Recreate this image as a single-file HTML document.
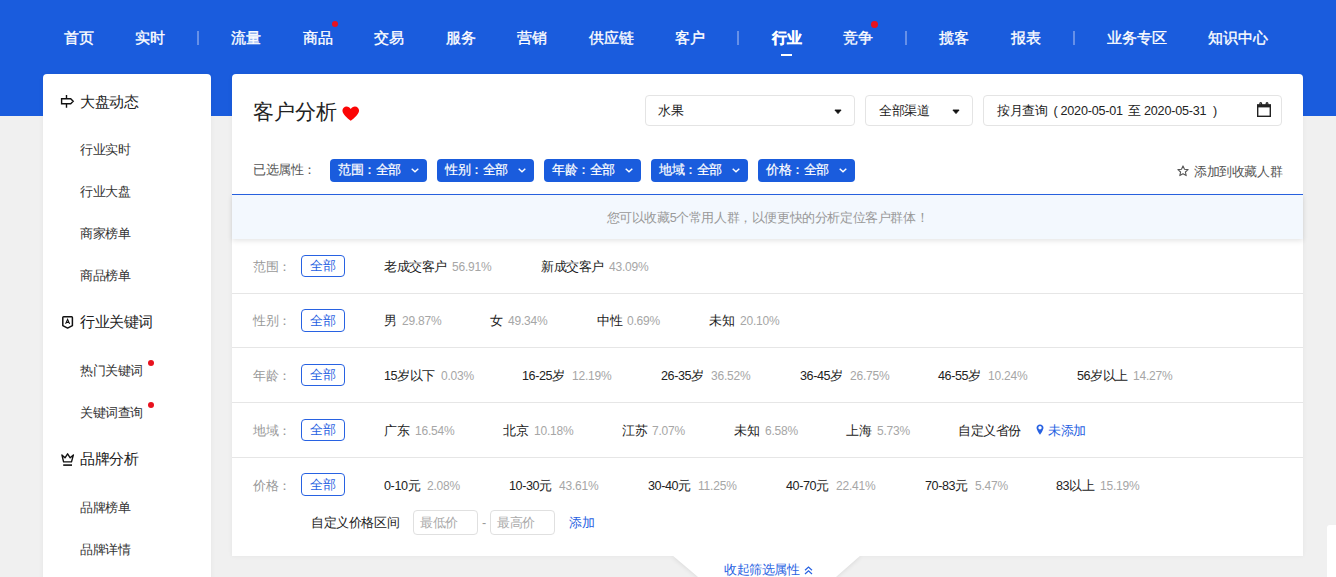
<!DOCTYPE html>
<html>
<head>
<meta charset="utf-8">
<style>
*{box-sizing:border-box;margin:0;padding:0}
html,body{width:1336px;height:577px;overflow:hidden;background:#f0f0f0;font-family:"Liberation Sans",sans-serif;letter-spacing:-0.4px;}
body{position:relative;}
.abs{position:absolute;white-space:nowrap;}
#hdr{position:absolute;left:0;top:0;width:1336px;height:116px;background:#1a5cdd;}
.nav{letter-spacing:0;position:absolute;top:27.5px;height:20px;line-height:20px;font-size:14.7px;color:#fff;white-space:nowrap;-webkit-text-stroke:0.35px #fff;}
.sep{position:absolute;top:31px;width:2px;height:14px;background:#6690e8;margin-left:-1px;}
.dot{position:absolute;width:6.8px;height:6.8px;border-radius:50%;background:#e8121e;}
#side{position:absolute;left:43px;top:74px;width:168px;height:520px;background:#fff;border-radius:4px 4px 0 0;box-shadow:0 0 5px rgba(0,0,0,0.05);}
.sh{position:absolute;left:37px;font-size:14.6px;color:#222;height:20px;line-height:20px;white-space:nowrap;}
.si{position:absolute;left:37px;margin-top:0.6px;font-size:12.6px;color:#333;height:20px;line-height:20px;white-space:nowrap;}
#main{position:absolute;left:232px;top:74px;width:1071px;height:482px;background:#fff;border-radius:4px 4px 0 0;box-shadow:0 0 5px rgba(0,0,0,0.05);}
.sel{position:absolute;top:21px;height:31px;border:1px solid #e4e4e4;border-radius:4px;background:#fff;font-size:12.6px;color:#222;line-height:30px;white-space:nowrap;}
.caret{position:absolute;top:13.2px;width:8px;height:6px;}
.tag{position:absolute;top:85px;width:97px;height:23px;background:#1a5cdd;border-radius:4px;color:#fff;font-size:12.6px;line-height:22px;padding-left:8px;white-space:nowrap;-webkit-text-stroke:0.2px #fff;}
.tag svg{position:absolute;left:80.5px;top:8.5px;}
.hr{position:absolute;left:0;width:1071px;height:1px;background:#e6e6e6;}
.lbl{position:absolute;left:21px;font-size:12.6px;color:#999;height:20px;line-height:20px;white-space:nowrap;}
.all{position:absolute;left:69px;width:44px;height:22px;border:1px solid #2862e2;border-radius:4px;color:#2862e2;font-size:12.6px;line-height:20px;text-align:center;}
.opt{position:absolute;font-size:12.6px;color:#222;height:20px;line-height:20px;white-space:nowrap;}
.pct{position:absolute;font-size:12px;letter-spacing:-0.2px;color:#a6a6a6;height:20px;line-height:20px;white-space:nowrap;}
.inp{position:absolute;top:436px;width:65px;height:25px;border:1px solid #e0e0e0;border-radius:4px;font-size:12.6px;color:#aaa;line-height:25px;padding-left:6px;white-space:nowrap;}
</style>
</head>
<body>
<div id="hdr">
  <div class="nav" style="left:64px">首页</div>
  <div class="nav" style="left:135px">实时</div>
  <div class="sep" style="left:198px"></div>
  <div class="nav" style="left:231px">流量</div>
  <div class="nav" style="left:303px">商品</div>
  <div class="dot" style="left:331.6px;top:20.7px"></div>
  <div class="nav" style="left:374px">交易</div>
  <div class="nav" style="left:446px">服务</div>
  <div class="nav" style="left:517px">营销</div>
  <div class="nav" style="left:589px">供应链</div>
  <div class="nav" style="left:675px">客户</div>
  <div class="sep" style="left:738px"></div>
  <div class="nav" style="left:772px;font-weight:bold;-webkit-text-stroke:0.25px #fff">行业</div>
  <div class="abs" style="left:781px;top:54px;width:11px;height:2px;background:#fff"></div>
  <div class="nav" style="left:843px">竞争</div>
  <div class="dot" style="left:871.1px;top:21px"></div>
  <div class="sep" style="left:906px"></div>
  <div class="nav" style="left:939px">揽客</div>
  <div class="nav" style="left:1011px">报表</div>
  <div class="sep" style="left:1074px"></div>
  <div class="nav" style="left:1107px">业务专区</div>
  <div class="nav" style="left:1208px">知识中心</div>
</div>

<div id="side">
  <svg class="abs" style="left:17px;top:20px" width="16" height="15" viewBox="0 0 16 15"><path d="M1.6 4.7H10.7L13.2 7.2L10.7 9.7H1.6Z M6.5 1V4.7 M6.5 9.7V13.8" fill="none" stroke="#111" stroke-width="1.4"/></svg>
  <div class="sh" style="top:18px">大盘动态</div>
  <div class="si" style="top:65px">行业实时</div>
  <div class="si" style="top:107px">行业大盘</div>
  <div class="si" style="top:149px">商家榜单</div>
  <div class="si" style="top:191px">商品榜单</div>
  <svg class="abs" style="left:18px;top:241px" width="14" height="15" viewBox="0 0 14 15"><path d="M1.8 2.6Q1.8 1.8 2.6 1.8H10.6Q11.4 1.8 11.4 2.6V10.6L6.6 13.1L1.8 10.6Z" fill="none" stroke="#111" stroke-width="1.5" stroke-linejoin="round"/><path d="M4.6 8.9L6.6 4.4L8.6 8.9M5.3 7.4H7.9" fill="none" stroke="#111" stroke-width="1.1"/></svg>
  <div class="sh" style="top:238px">行业关键词</div>
  <div class="si" style="top:286px">热门关键词</div>
  <div class="dot" style="left:104.8px;top:286px;width:6.4px;height:6.4px"></div>
  <div class="si" style="top:328px">关键词查询</div>
  <div class="dot" style="left:104.8px;top:328px;width:6.4px;height:6.4px"></div>
  <svg class="abs" style="left:17px;top:378px" width="16" height="15" viewBox="0 0 16 15"><path d="M1.9 2.9L3.6 9.9H11.5L13.4 2.9L10.2 5.8L7.6 1.8L5 5.8Z" fill="none" stroke="#111" stroke-width="1.4" stroke-linejoin="round"/><path d="M3.2 13.1H12" stroke="#111" stroke-width="1.6"/></svg>
  <div class="sh" style="top:375px">品牌分析</div>
  <div class="si" style="top:423px">品牌榜单</div>
  <div class="si" style="top:465px">品牌详情</div>
</div>

<svg class="abs" style="left:640px;top:546px" width="254" height="31" viewBox="0 0 254 31">
  <defs><filter id="ts" x="-10%" y="-30%" width="120%" height="160%"><feGaussianBlur stdDeviation="2.5"/></filter></defs>
  <polygon points="32,10 221,10 196,31 58,31" fill="#000" opacity="0.10" filter="url(#ts)"/>
</svg>
<div id="main">
  <div class="abs" style="left:21px;top:23px;font-size:21px;letter-spacing:0;line-height:30px;color:#222">客户分析</div>
  <svg class="abs" style="left:110px;top:31.5px" width="17.5" height="15.5" viewBox="0 0 18 16"><path d="M9 15.2C9 15.2 0.4 9.2 0.4 4.9C0.4 2.3 2.4 0.5 4.7 0.5C6.5 0.5 8.1 1.5 9 3.1C9.9 1.5 11.5 0.5 13.3 0.5C15.6 0.5 17.6 2.3 17.6 4.9C17.6 9.2 9 15.2 9 15.2Z" fill="#fb0505"/></svg>
  <div class="sel" style="left:413px;width:210px;padding-left:12px">水果<svg class="caret" style="left:187.8px" viewBox="0 0 8 6"><path d="M0.9 1H7.1L4 4.6Z" fill="#111" stroke="#111" stroke-width="0.9" stroke-linejoin="round"/></svg></div>
  <div class="sel" style="left:633px;width:108px;padding-left:13px">全部渠道<svg class="caret" style="left:85.8px" viewBox="0 0 8 6"><path d="M0.9 1H7.1L4 4.6Z" fill="#111" stroke="#111" stroke-width="0.9" stroke-linejoin="round"/></svg></div>
  <div class="sel" style="left:751px;width:299px;">
    <span class="abs" style="left:13px">按月查询</span><span class="abs" style="left:69.5px">(</span><span class="abs" style="left:76.5px;letter-spacing:-0.2px">2020-05-01</span><span class="abs" style="left:144px">至</span><span class="abs" style="left:160px;letter-spacing:-0.2px">2020-05-31</span><span class="abs" style="left:229px">)</span>
    <svg class="abs" style="left:272px;top:5px" width="16" height="17" viewBox="0 0 16 17"><rect x="1.7" y="4.1" width="12.6" height="11.2" fill="none" stroke="#222" stroke-width="1.4"/><rect x="1" y="3.4" width="14" height="3" fill="#222"/><path d="M3.9 4V2.7Q3.9 1.6 4.75 1.6Q5.6 1.6 5.6 2.7V4M10.2 4V2.7Q10.2 1.6 11.05 1.6Q11.9 1.6 11.9 2.7V4" fill="none" stroke="#222" stroke-width="1.2"/></svg>
  </div>

  <div class="abs" style="left:21px;top:86px;font-size:12.6px;line-height:20px;color:#555">已选属性：</div>
  <div class="tag" style="left:98px">范围：全部<svg width="8" height="5" viewBox="0 0 8 5"><path d="M0.7 0.7L4 3.8L7.3 0.7" fill="none" stroke="#fff" stroke-width="1.4"/></svg></div>
  <div class="tag" style="left:205px">性别：全部<svg width="8" height="5" viewBox="0 0 8 5"><path d="M0.7 0.7L4 3.8L7.3 0.7" fill="none" stroke="#fff" stroke-width="1.4"/></svg></div>
  <div class="tag" style="left:312px">年龄：全部<svg width="8" height="5" viewBox="0 0 8 5"><path d="M0.7 0.7L4 3.8L7.3 0.7" fill="none" stroke="#fff" stroke-width="1.4"/></svg></div>
  <div class="tag" style="left:419px">地域：全部<svg width="8" height="5" viewBox="0 0 8 5"><path d="M0.7 0.7L4 3.8L7.3 0.7" fill="none" stroke="#fff" stroke-width="1.4"/></svg></div>
  <div class="tag" style="left:526px">价格：全部<svg width="8" height="5" viewBox="0 0 8 5"><path d="M0.7 0.7L4 3.8L7.3 0.7" fill="none" stroke="#fff" stroke-width="1.4"/></svg></div>
  <div class="abs" style="left:962px;top:87.5px;font-size:12.6px;line-height:20px;color:#555">添加到收藏人群</div>
  <svg class="abs" style="left:945px;top:91px" width="12" height="12" viewBox="0 0 12 12"><path d="M6 0.9L7.5 4.2L11.1 4.6L8.4 7L9.2 10.6L6 8.8L2.8 10.6L3.6 7L0.9 4.6L4.5 4.2Z" fill="none" stroke="#555" stroke-width="1.1" stroke-linejoin="round"/></svg>

  <div class="abs" style="left:0;top:120px;width:1071px;height:1px;background:#2862e2"></div>
  <div class="abs" style="left:0;top:121px;width:1071px;height:43.6px;background:#f3f8fe;box-shadow:0 2px 5px rgba(0,0,0,0.10);text-align:center;font-size:12.6px;line-height:46px;color:#999">您可以收藏5个常用人群，以便更快的分析定位客户群体！</div>

  <div class="hr" style="top:219px"></div>
  <div class="hr" style="top:273px"></div>
  <div class="hr" style="top:328px"></div>
  <div class="hr" style="top:383px"></div>

  <div class="lbl" style="top:182.6px">范围：</div><div class="all" style="top:181px;height:22px;line-height:21.6px">全部</div>
  <div class="lbl" style="top:237px">性别：</div><div class="all" style="top:235px;height:23px;line-height:22.6px">全部</div>
  <div class="lbl" style="top:292px">年龄：</div><div class="all" style="top:290px;height:22px;line-height:21.6px">全部</div>
  <div class="lbl" style="top:347px">地域：</div><div class="all" style="top:345px;height:22px;line-height:21.6px">全部</div>
  <div class="lbl" style="top:401.6px">价格：</div><div class="all" style="top:399px;height:23px;line-height:22.6px">全部</div>
  <div class="opt" style="left:152px;top:182.6px">老成交客户</div>
  <div class="pct" style="left:220px;top:182.6px">56.91%</div>
  <div class="opt" style="left:309px;top:182.6px">新成交客户</div>
  <div class="pct" style="left:377px;top:182.6px">43.09%</div>
  <div class="opt" style="left:152px;top:237px">男</div>
  <div class="pct" style="left:170px;top:237px">29.87%</div>
  <div class="opt" style="left:258px;top:237px">女</div>
  <div class="pct" style="left:276px;top:237px">49.34%</div>
  <div class="opt" style="left:365px;top:237px">中性</div>
  <div class="pct" style="left:395px;top:237px">0.69%</div>
  <div class="opt" style="left:477px;top:237px">未知</div>
  <div class="pct" style="left:508px;top:237px">20.10%</div>
  <div class="opt" style="left:152px;top:292px">15岁以下</div>
  <div class="pct" style="left:209px;top:292px">0.03%</div>
  <div class="opt" style="left:290px;top:292px">16-25岁</div>
  <div class="pct" style="left:340px;top:292px">12.19%</div>
  <div class="opt" style="left:429px;top:292px">26-35岁</div>
  <div class="pct" style="left:479px;top:292px">36.52%</div>
  <div class="opt" style="left:568px;top:292px">36-45岁</div>
  <div class="pct" style="left:618px;top:292px">26.75%</div>
  <div class="opt" style="left:706px;top:292px">46-55岁</div>
  <div class="pct" style="left:756px;top:292px">10.24%</div>
  <div class="opt" style="left:845px;top:292px">56岁以上</div>
  <div class="pct" style="left:901px;top:292px">14.27%</div>
  <div class="opt" style="left:152px;top:347px">广东</div>
  <div class="pct" style="left:183px;top:347px">16.54%</div>
  <div class="opt" style="left:271px;top:347px">北京</div>
  <div class="pct" style="left:302px;top:347px">10.18%</div>
  <div class="opt" style="left:390px;top:347px">江苏</div>
  <div class="pct" style="left:420px;top:347px">7.07%</div>
  <div class="opt" style="left:502px;top:347px">未知</div>
  <div class="pct" style="left:533px;top:347px">6.58%</div>
  <div class="opt" style="left:614px;top:347px">上海</div>
  <div class="pct" style="left:645px;top:347px">5.73%</div>
  <div class="opt" style="left:726px;top:347px">自定义省份</div>
  <div class="opt" style="left:152px;top:401.6px">0-10元</div>
  <div class="pct" style="left:195px;top:401.6px">2.08%</div>
  <div class="opt" style="left:277px;top:401.6px">10-30元</div>
  <div class="pct" style="left:327px;top:401.6px">43.61%</div>
  <div class="opt" style="left:416px;top:401.6px">30-40元</div>
  <div class="pct" style="left:466px;top:401.6px">11.25%</div>
  <div class="opt" style="left:554px;top:401.6px">40-70元</div>
  <div class="pct" style="left:604px;top:401.6px">22.41%</div>
  <div class="opt" style="left:693px;top:401.6px">70-83元</div>
  <div class="pct" style="left:743px;top:401.6px">5.47%</div>
  <div class="opt" style="left:824px;top:401.6px">83以上</div>
  <div class="pct" style="left:868px;top:401.6px">15.19%</div>
  <svg class="abs" style="left:803.5px;top:350px" width="8" height="11.5" viewBox="0 0 9 13"><path d="M4.5 0.5C2.3 0.5 0.6 2.2 0.6 4.3C0.6 6.9 4.5 12.3 4.5 12.3C4.5 12.3 8.4 6.9 8.4 4.3C8.4 2.2 6.7 0.5 4.5 0.5Z" fill="#2862e2"/><circle cx="4.5" cy="4.3" r="1.9" fill="#fff"/></svg>
  <div class="opt" style="left:816px;top:347px;color:#2862e2">未添加</div>
  <div class="opt" style="left:79px;top:439px">自定义价格区间</div>
  <div class="inp" style="left:181px">最低价</div>
  <div class="opt" style="left:250px;top:439px;color:#999">-</div>
  <div class="inp" style="left:258px">最高价</div>
  <div class="opt" style="left:337px;top:439px;color:#2862e2">添加</div>
</div>
<svg class="abs" style="left:640px;top:546px" width="254" height="31" viewBox="0 0 254 31"><polygon points="32,9 221,9 196,31 58,31" fill="#fff"/></svg>
<div class="abs" style="left:724px;top:560px;font-size:13px;line-height:20px;color:#2862e2">收起筛选属性</div>
<svg class="abs" style="left:804px;top:566px" width="9" height="9" viewBox="0 0 9 9"><path d="M1 4.2L4.5 1L8 4.2M1 8L4.5 4.8L8 8" fill="none" stroke="#2862e2" stroke-width="1.2"/></svg>
<div class="abs" style="left:1327px;top:525px;width:10px;height:52px;background:#fff;border-radius:3px 0 0 0"></div>
</body>
</html>
